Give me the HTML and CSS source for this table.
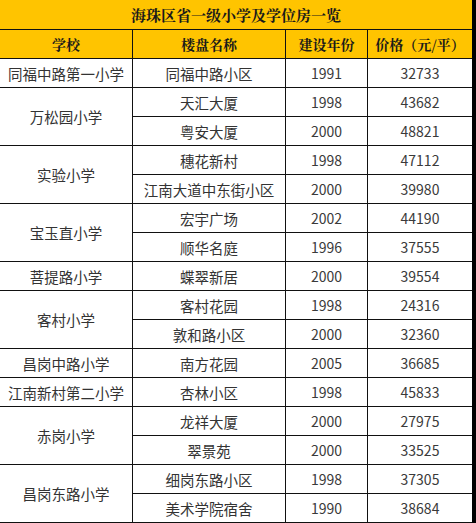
FILE: index.html
```html
<!DOCTYPE html>
<html lang="zh-CN">
<head>
<meta charset="utf-8">
<title>海珠区省一级小学及学位房一览</title>
<link rel="stylesheet" href="styles.css">
</head>
<body>
<div class="sheet">
  <div class="cell title">海珠区省一级小学及学位房一览</div>
  <div class="cell head">学校</div>
  <div class="cell head">楼盘名称</div>
  <div class="cell head">建设年份</div>
  <div class="cell head">价格（元/平）</div>

  <div class="cell">同福中路第一小学</div>
  <div class="cell">同福中路小区</div><div class="cell num">1991</div><div class="cell num">32733</div>

  <div class="cell span2">万松园小学</div>
  <div class="cell">天汇大厦</div><div class="cell num">1998</div><div class="cell num">43682</div>
  <div class="cell">粤安大厦</div><div class="cell num">2000</div><div class="cell num">48821</div>

  <div class="cell span2">实验小学</div>
  <div class="cell">穗花新村</div><div class="cell num">1998</div><div class="cell num">47112</div>
  <div class="cell">江南大道中东街小区</div><div class="cell num">2000</div><div class="cell num">39980</div>

  <div class="cell span2">宝玉直小学</div>
  <div class="cell">宏宇广场</div><div class="cell num">2002</div><div class="cell num">44190</div>
  <div class="cell">顺华名庭</div><div class="cell num">1996</div><div class="cell num">37555</div>

  <div class="cell">菩提路小学</div>
  <div class="cell">蝶翠新居</div><div class="cell num">2000</div><div class="cell num">39554</div>

  <div class="cell span2">客村小学</div>
  <div class="cell">客村花园</div><div class="cell num">1998</div><div class="cell num">24316</div>
  <div class="cell">敦和路小区</div><div class="cell num">2000</div><div class="cell num">32360</div>

  <div class="cell">昌岗中路小学</div>
  <div class="cell">南方花园</div><div class="cell num">2005</div><div class="cell num">36685</div>

  <div class="cell">江南新村第二小学</div>
  <div class="cell">杏林小区</div><div class="cell num">1998</div><div class="cell num">45833</div>

  <div class="cell span2">赤岗小学</div>
  <div class="cell">龙祥大厦</div><div class="cell num">2000</div><div class="cell num">27975</div>
  <div class="cell">翠景苑</div><div class="cell num">2000</div><div class="cell num">33525</div>

  <div class="cell span2">昌岗东路小学</div>
  <div class="cell">细岗东路小区</div><div class="cell num">1998</div><div class="cell num">37305</div>
  <div class="cell">美术学院宿舍</div><div class="cell num">1990</div><div class="cell num">38684</div>
</div>
</body>
</html>
```
FILE: styles.css
```css
html, body {
  margin: 0;
  padding: 0;
  background: #000;
}
body {
  width: 476px;
  height: 523px;
  overflow: hidden;
}
.sheet {
  width: 472px;
  display: grid;
  grid-template-columns: 132px 152px 81px 104px;
  grid-template-rows: 29px 28px repeat(16, 28px);
  gap: 1px;
  padding-bottom: 1px;
  background: #111;
  font-family: "Noto Sans CJK SC", "Noto Sans", sans-serif;
}
.cell {
  background: #fff;
  display: flex;
  align-items: center;
  justify-content: center;
  font-size: 14.5px;
  color: #333;
  white-space: nowrap;
  overflow: hidden;
}
.title {
  grid-column: 1 / -1;
  background: #ffc400;
  font-family: "Noto Serif CJK SC", "Noto Sans CJK SC", serif;
  font-weight: 700;
  font-size: 15px;
  color: #1a1a1a;
}
.head {
  background: #ffc400;
  font-family: "Noto Serif CJK SC", "Noto Sans CJK SC", serif;
  font-weight: 700;
  font-size: 14px;
  color: #1a1a1a;
}
.span2 {
  grid-row: span 2;
}
.num {
  font-size: 14px;
  color: #3a3a3a;
}
```
